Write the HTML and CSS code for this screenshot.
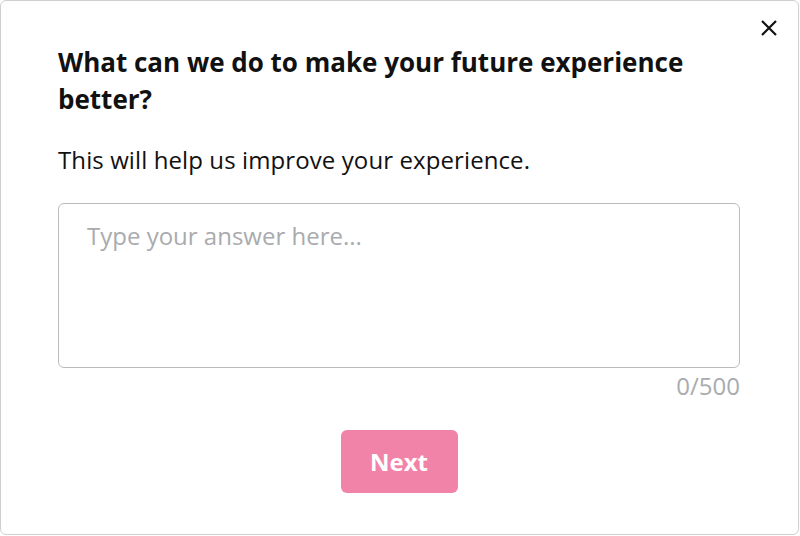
FILE: index.html
```html
<!DOCTYPE html>
<html>
  <head>
    <meta charset="utf-8"/>
    <link rel="stylesheet" href="styles.css">
  </head>
  <body>
    <div class="survey">
      <button class="survey-close" aria-label="Close">
        <svg width="18" height="18" viewBox="0 0 18 18">
          <path d="M2 2 L16 16 M16 2 L2 16" stroke="#111" stroke-width="2.2" fill="none"/>
        </svg>
      </button>
      <h1 class="survey-title">What can we do to make your future experience better?</h1>
      <p class="survey-sub">This will help us improve your experience.</p>
      <div class="survey-field">
        <textarea class="survey-input" placeholder="Type your answer here..." maxlength="500"></textarea>
        <div class="survey-count">0/500</div>
      </div>
      <div class="survey-actions">
        <button class="survey-next">Next</button>
      </div>
    </div>
  </body>
</html>
```

FILE: styles.css
```css
html, body {
  margin: 0;
  padding: 0;
  background: #ffffff;
}

body {
  font-family: "Open Sans", "Noto Sans", sans-serif;
  color: #111;
}

.survey {
  position: relative;
  box-sizing: border-box;
  width: 799px;
  height: 535px;
  border: 1px solid #cfcfcf;
  border-radius: 6px;
  padding: 43px 58px 0 57px;
}

.survey-close {
  position: absolute;
  top: 17px;
  right: 19px;
  width: 20px;
  height: 20px;
  padding: 0;
  border: 0;
  background: none;
  display: flex;
  align-items: center;
  justify-content: center;
}

.survey-title {
  margin: 0;
  font-size: 26px;
  font-weight: 700;
  line-height: 37px;
  width: 660px;
}

.survey-sub {
  margin: 26px 0 0 0;
  font-size: 24px;
  letter-spacing: 0.1px;
  line-height: 32px;
}

.survey-field {
  margin-top: 27px;
}

.survey-input {
  display: block;
  box-sizing: border-box;
  width: 100%;
  height: 165px;
  border: 1.5px solid #bcbcbc;
  border-radius: 6px;
  padding: 15px 28px;
  font-family: "Open Sans", "Noto Sans", sans-serif;
  font-size: 24px;
  line-height: 33px;
  resize: none;
  outline: none;
}

.survey-input::placeholder {
  color: #a9abae;
}

.survey-count {
  text-align: right;
  font-size: 24px;
  line-height: 36px;
  color: #a9abae;
}

.survey-actions {
  display: flex;
  justify-content: center;
  margin-top: 26px;
}

.survey-next {
  width: 117px;
  height: 63px;
  border: 0;
  border-radius: 6px;
  background: #f283a8;
  color: #fff;
  font-family: "Open Sans", "Noto Sans", sans-serif;
  font-size: 24px;
  font-weight: 700;
}
```
